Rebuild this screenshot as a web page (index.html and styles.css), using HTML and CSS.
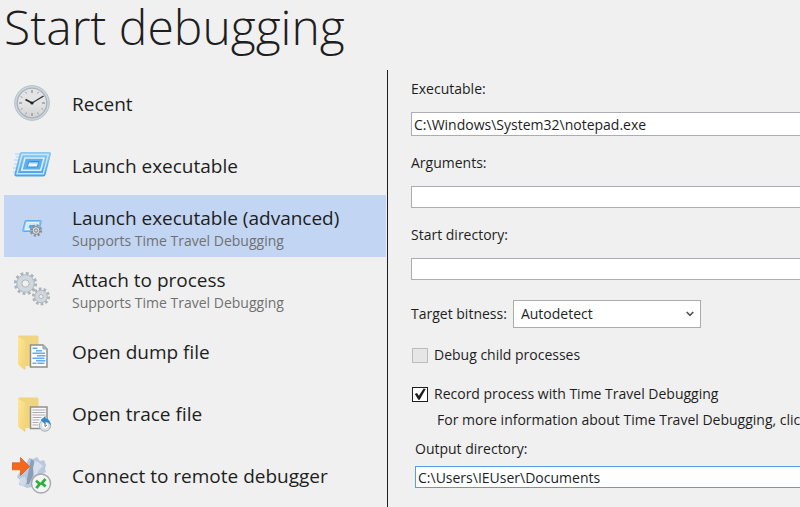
FILE: index.html
```
<!DOCTYPE html>
<html lang="en">
<head>
<meta charset="utf-8">
<meta name="viewport" content="width=device-width, initial-scale=1">
<title>Start debugging</title>
<link rel="stylesheet" href="styles.css">
</head>
<body>
<header class="header"><h1 class="title">Start debugging</h1></header>
<main class="layout">
  <nav class="nav">
    <button class="nav-item" type="button">
      <svg class="icon" viewBox="0 0 40 40" aria-hidden="true">
        <defs><linearGradient id="face" x1="0" y1="0" x2="0" y2="1"><stop offset="0" stop-color="#e2e3e6"/><stop offset=".5" stop-color="#e4e4e6"/><stop offset="1" stop-color="#d2d2d3"/></linearGradient></defs>
        <g transform="translate(0 1)">
        <circle cx="20" cy="20" r="17.3" fill="#cfd8de" stroke="#b4bec6" stroke-width="1"/>
        <circle cx="20" cy="20" r="14.8" fill="url(#face)" stroke="#a9b3bb" stroke-width="1.3"/>
        <g stroke="#9b9c9e" stroke-width="1.5"><path d="M20 7v3M20 30v3M7 20h3M30 20h3"/><path stroke-width="1" d="M13.5 8.7l1 1.8M26.5 8.7l-1 1.8M8.7 13.5l1.8 1M31.3 13.5l-1.8 1M8.7 26.5l1.8-1M31.3 26.5l-1.8-1M13.5 31.3l1-1.8M26.5 31.3l-1-1.8"/></g>
        <path d="M13.5 16.5L20 20" stroke="#292929" stroke-width="1.8"/><path d="M20 20L31.5 13" stroke="#333" stroke-width="1.3"/><circle cx="20" cy="20" r="1.6" fill="#222"/>
        </g>
      </svg>
      <span class="nav-text"><span class="nav-title">Recent</span></span>
    </button>
    <button class="nav-item" type="button">
      <svg class="icon" viewBox="0 0 40 40" aria-hidden="true">
        <defs><linearGradient id="blue" x1="0" y1="0" x2="0" y2="1"><stop offset="0" stop-color="#8dc8ef"/><stop offset="1" stop-color="#48a1eb"/></linearGradient></defs>
        <path d="M3 10h7M4 13h5M2 16h6M2 20h5M1 24h5M1 28h4" stroke="#9dd1f3" stroke-width="1.5" opacity=".6"/>
        <path d="M9 8h28q2.500 0 1.800 2.500l-5 19.500q-.5 2.500-2.800 2.500H4.500q-2.500 0-2-2.500l4.800-19.500Q7.800 8 9 8z" fill="url(#blue)"/>
        <path d="M10 10.500h26.300l-5 19.300H5z" fill="none" stroke="#c7e7fb" stroke-width="1.400"/>
        <path d="M13 14h19l-3.300 12.300H9.700z" fill="#5eb0ed" stroke="#d7effe" stroke-width="1.600"/>
        <path d="M16.800 17.500h10l-1.500 5.500h-10z" fill="#ecf7fe" stroke="#348fdb" stroke-width="1"/>
        <path d="M17.300 18.800h8.700" stroke="#7bbdee" stroke-width="1.300"/>
      </svg>
      <span class="nav-text"><span class="nav-title">Launch executable</span></span>
    </button>
    <button class="nav-item nav-item--selected" type="button" aria-current="page">
      <svg class="icon" viewBox="0 0 40 40" aria-hidden="true">
        <path d="M13.500 14.500h15q1 0 .8 1l-2.300 8.500q-.3 1.500-1.700 1.500H11.500q-1 0-.8-1l2.100-8.500q.3-1.500.7-1.500z" fill="#8cc8f2" stroke="#5cafec"/>
        <path d="M14.800 16.500h12l-1.800 7H13z" fill="#d0e9fa" stroke="#eaf6fe"/><path d="M17.500 19h6l-.8 3h-6z" fill="#5aa7df"/>
        <circle cx="24" cy="24.500" r="5" fill="none" stroke="#868d93" stroke-width="2.400" stroke-dasharray="2 1.927"/>
        <circle cx="24" cy="24.500" r="3.900" fill="#d8dcdf" stroke="#82898e" stroke-width="1"/>
        <circle cx="24" cy="24.500" r="1.700" fill="#c2d5f2" stroke="#777e83" stroke-width=".8"/>
      </svg>
      <span class="nav-text"><span class="nav-title">Launch executable (advanced)</span><span class="nav-note">Supports Time Travel Debugging</span></span>
    </button>
    <button class="nav-item" type="button">
      <svg class="icon" viewBox="0 0 40 40" aria-hidden="true">
        <g fill="none" stroke="#aab4ba"><circle cx="13.500" cy="15.500" r="10" stroke-width="3.200" stroke-dasharray="2.800 2.436"/><circle cx="29" cy="28.500" r="7.500" stroke-width="3" stroke-dasharray="2.600 2.112"/></g>
        <g fill="#d0d8dd" stroke="#b0bac0"><circle cx="13.500" cy="15.500" r="8.800"/><circle cx="29" cy="28.500" r="6.300"/></g>
        <g fill="#f0f0f0" stroke="#aeb9bf"><circle cx="13.500" cy="15.500" r="3.600"/><circle cx="29" cy="28.500" r="2"/></g>
      </svg>
      <span class="nav-text"><span class="nav-title">Attach to process</span><span class="nav-note">Supports Time Travel Debugging</span></span>
    </button>
    <button class="nav-item" type="button">
      <svg class="icon" viewBox="0 0 40 40" aria-hidden="true">
        <defs><linearGradient id="folder" x1="0" y1="0" x2="1" y2="1"><stop offset="0" stop-color="#ffe795"/><stop offset="1" stop-color="#f1d176"/></linearGradient></defs>
        <g transform="translate(0 2.500)">
        <path d="M6 4.500q0-1.500 1.500-1.500H25q1.500 0 1.500 1.500v29H13z" fill="#f0d47f"/><path d="M6 4l6.500 4q1 .6 1 2V36q0 2-2 .6L7 33q-1-.8-1-2z" fill="url(#folder)"/>
        <path d="M18.500 12.500h12.500l4 4v18h-16.500z" fill="#fff" stroke="#8d8d8d" stroke-width="1.500"/><path d="M31 12.500v4h4" fill="#bbb" stroke="#999"/>
        <path d="M20.500 15.800h5M24 18.300h6M20.500 20.800h7M25 20.800h8M25 23.300h8.500M20.500 25.800h12M24 28.300h9.500M20.500 30.800h4M25.500 30.800h7" stroke="#61adef" stroke-width="1.400"/>
        </g>
      </svg>
      <span class="nav-text"><span class="nav-title">Open dump file</span></span>
    </button>
    <button class="nav-item" type="button">
      <svg class="icon" viewBox="0 0 40 40" aria-hidden="true">
        <g transform="translate(0 2.500)">
        <path d="M6 4.500q0-1.500 1.500-1.500H25q1.500 0 1.500 1.500v29H13z" fill="#f0d47f"/><path d="M6 4l6.500 4q1 .6 1 2V36q0 2-2 .6L7 33q-1-.8-1-2z" fill="url(#folder)"/>
        <path d="M18.500 12.500h16.500v21.500H18.500z" fill="#f9f9f9" stroke="#909090" stroke-width="1.500"/>
        <path d="M20.500 15.500h13M20.500 18h13M20.500 20.500h13M20.500 23h9M20.500 25.500h7M20.500 28h6M20.500 30.500h6" stroke="#adadad"/>
        <circle cx="33" cy="31" r="5.700" fill="#dbe2e6" stroke="#a2afb8"/><circle cx="33" cy="31" r="3.700" fill="#fff" stroke="#c0c9cf" stroke-width=".7"/>
        <path d="M33 28v4l2-1.500" fill="none" stroke="#67717a"/><path d="M28.500 25.500l5-4v2.300q5 .7 5 7.200-1.800-3.400-5-3.500v2.300z" fill="#3588c8"/>
        </g>
      </svg>
      <span class="nav-text"><span class="nav-title">Open trace file</span></span>
    </button>
    <button class="nav-item" type="button">
      <svg class="icon" viewBox="0 0 40 40" aria-hidden="true">
        <g transform="translate(0 1)">
        <path d="M17 3l4 1 4-2 3 4 4-1 2 5-1 4 1 3-4 2-4 5-4 6-2 2-5 1-4-2-4-1 1-5-3-3 2-4 5-5z" fill="#b9c9df"/>
        <path d="M19 4l3 2-1 15-4 8-3 0 2-10z" fill="#8c9eb6"/><path d="M23 6l3 1 5 4-4 4-4 8-2-10z" fill="#d7e0eb"/><path d="M8 23l5-1 2 5-3 4-4-2z" fill="#d0dbe8"/>
        <path d="M0 7.800h8.500V2.500l9 9-9 9V14.800H0z" fill="#f3681d" stroke="#dc570e" stroke-width=".7"/>
        <circle cx="29" cy="28.500" r="9.500" fill="#f4f4f4" stroke="#a8a8a8" stroke-width="1.400"/>
        <path d="M24 25.700l3.800 3.200-3.500 4.300M33.500 24l-3.800 4.300 4 3" fill="none" stroke="#2eaf3f" stroke-width="2.700"/>
        </g>
      </svg>
      <span class="nav-text"><span class="nav-title">Connect to remote debugger</span></span>
    </button>
  </nav>
  <form class="form">
    <div class="field"><label for="exe">Executable:</label><input class="text-box text-box--tall" id="exe" type="text" value="C:\Windows\System32\notepad.exe"></div>
    <div class="field"><label for="args">Arguments:</label><input class="text-box" id="args" type="text"></div>
    <div class="field"><label for="start">Start directory:</label><input class="text-box" id="start" type="text"></div>
    <div class="bitness">
      <label for="bits">Target bitness:</label>
      <span class="select-wrap"><select id="bits" class="select"><option>Autodetect</option></select><svg class="chevron" viewBox="0 0 8 6" aria-hidden="true"><path d="M.7 1L4 4.300 7.300 1" fill="none" stroke="#555" stroke-width="1.700"/></svg></span>
    </div>
    <label class="check"><input type="checkbox" class="box" disabled>Debug child processes</label>
    <label class="check"><input type="checkbox" class="box" checked>Record process with Time Travel Debugging</label>
    <p class="info">For more information about Time Travel Debugging, click</p>
    <div class="field field--output"><label for="out">Output directory:</label><input class="text-box text-box--active" id="out" type="text" value="C:\Users\IEUser\Documents"></div>
  </form>
</main>
</body>
</html>
```
FILE: styles.css
```
* { box-sizing: border-box; }
body {
  margin: 0;
  min-height: 100vh;
  display: flex;
  flex-direction: column;
  overflow: hidden;
  background: #f0f0f0;
  color: #1e1e1e;
  font: 14px/20px "Open Sans", "Noto Sans", sans-serif;
}
button, input, select { font: inherit; color: inherit; border-radius: 0; }
.header { padding: 0 4px 16px; }
.title { margin: 0; font-size: 48px; line-height: 54px; font-weight: 300; }
.layout { flex: 1; display: flex; }
.nav {
  flex: 0 0 388px;
  padding: 1px 1px 0 4px;
  border-right: 1px solid #1e1e1e;
}
.nav-item {
  display: flex;
  align-items: center;
  gap: 20px;
  width: 100%;
  height: 62px;
  padding: 0 8px;
  border: 0;
  background: none;
  text-align: left;
}
.nav-item--selected { background: #c2d5f2; }
.icon { flex: none; width: 40px; height: 40px; }
.nav-text { display: flex; flex-direction: column; gap: 1px; padding-top: 4px; white-space: nowrap; }
.nav-title { font-size: 19px; line-height: 24px; }
.nav-note { color: #717171; line-height: 20px; }
.form { flex: 1; min-width: 0; padding: 9px 0 0 23px; }
.field { display: flex; flex-direction: column; gap: 13px; margin-bottom: 17px; }
.text-box {
  width: 100%;
  height: 22px;
  padding: 0 2px;
  border: 1px solid #abadb3;
  border-right: 0;
  background: #fff;
  outline: 0;
}
.text-box--tall { height: 24px; }
.text-box--active { border-color: #569de5; }
.bitness { display: flex; align-items: center; gap: 6px; margin: 20px 0 17px; }
.select-wrap { position: relative; width: 188px; }
.select {
  display: block;
  width: 100%;
  height: 28px;
  padding: 0 7px;
  border: 1px solid #acacac;
  background: #fff;
  appearance: none;
}
.chevron { position: absolute; right: 7px; top: 11px; width: 8px; height: 6px; pointer-events: none; }
.check { display: flex; align-items: center; gap: 6px; margin-bottom: 19px; padding-left: 1px; white-space: nowrap; }
.box {
  appearance: none;
  flex: none;
  width: 16px;
  height: 15px;
  margin: 0;
  border: 1px solid #1e1e1e;
  background: #fff;
}
.box:disabled { border-color: #bcbcbc; background: #e6e6e6; }
.box:checked::before {
  content: "";
  display: block;
  height: 100%;
  background: #1e1e1e;
  clip-path: polygon(13% 50%, 28% 42%, 42% 64%, 76% 8%, 91% 12%, 48% 94%, 38% 94%);
}
.info { margin: -13px 0 9px; padding-left: 26px; white-space: nowrap; overflow: hidden; }
.field--output { gap: 7px; padding-left: 4px; }
```
